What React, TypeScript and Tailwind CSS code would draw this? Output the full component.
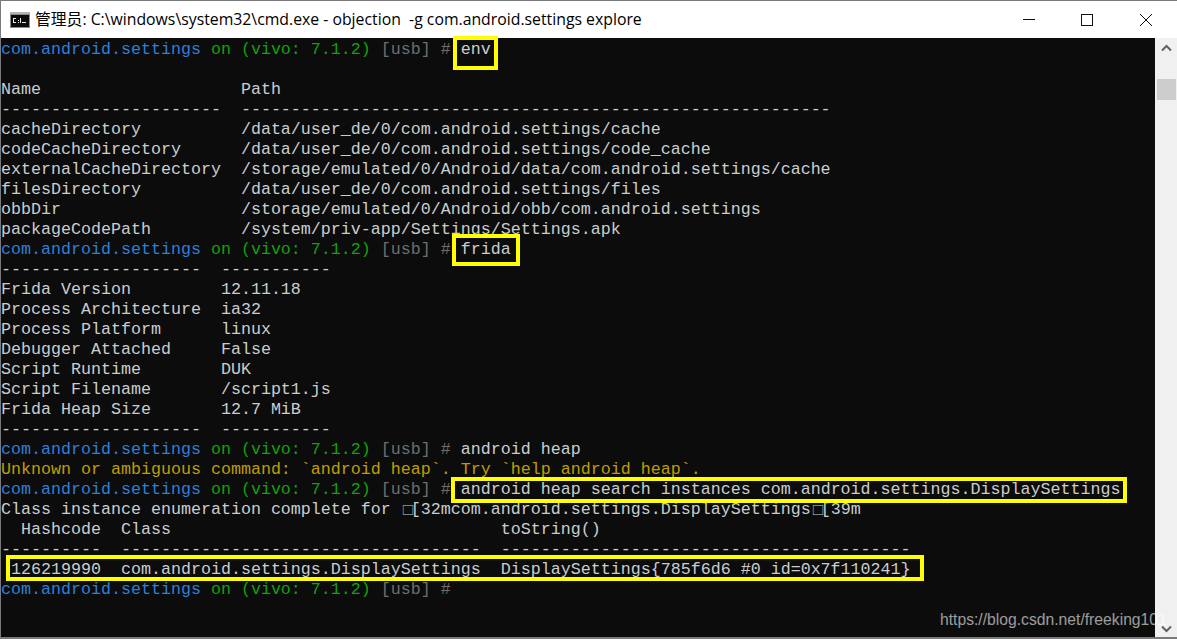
import React from "react";

const Prompt = ({ cmd }: { cmd?: string }) => (
  <>
    <span className="text-[#2f7fd6]">com.android.settings </span>
    <span className="text-[#13a10e]">on (vivo: 7.1.2) </span>
    <span className="text-[#6e6e6e]">[usb] # </span>
    {cmd ? <span>{cmd}</span> : null}
  </>
);

const Esc = () => (
  <span className="inline-block w-[10px] translate-x-[2px] scale-[1.25] font-['Noto_Sans_CJK_SC',sans-serif] text-[10px] leading-none">□</span>
);

const lines: React.ReactNode[] = [
  <Prompt cmd="env" />,
  "",
  "Name                    Path",
  "----------------------  -----------------------------------------------------------",
  "cacheDirectory          /data/user_de/0/com.android.settings/cache",
  "codeCacheDirectory      /data/user_de/0/com.android.settings/code_cache",
  "externalCacheDirectory  /storage/emulated/0/Android/data/com.android.settings/cache",
  "filesDirectory          /data/user_de/0/com.android.settings/files",
  "obbDir                  /storage/emulated/0/Android/obb/com.android.settings",
  "packageCodePath         /system/priv-app/Settings/Settings.apk",
  <Prompt cmd="frida" />,
  "--------------------  -----------",
  "Frida Version         12.11.18",
  "Process Architecture  ia32",
  "Process Platform      linux",
  "Debugger Attached     False",
  "Script Runtime        DUK",
  "Script Filename       /script1.js",
  "Frida Heap Size       12.7 MiB",
  "--------------------  -----------",
  <Prompt cmd="android heap" />,
  <span className="text-[#c19c00]">Unknown or ambiguous command: `android heap`. Try `help android heap`.</span>,
  <Prompt cmd="android heap search instances com.android.settings.DisplaySettings" />,
  <>
    Class instance enumeration complete for <Esc />[32mcom.android.settings.DisplaySettings<Esc />[39m
  </>,
  "  Hashcode  Class                                 toString()",
  "----------  ------------------------------------  -----------------------------------------",
  " 126219990  com.android.settings.DisplaySettings  DisplaySettings{785f6d6 #0 id=0x7f110241}",
  <Prompt />,
];

const boxes = [
  "left-[452px] top-[35px] w-[45px] h-[34px] border-[4px]",
  "left-[451px] top-[233px] w-[68px] h-[32px] border-[4px]",
  "left-[450px] top-[476px] w-[676px] h-[26px] border-[4px]",
  "left-[5px] top-[554px] w-[918px] h-[26px] border-[4px]",
];

export default function App() {
  return (
    <div className="relative flex h-[639px] w-[1177px] flex-col overflow-hidden border-t border-l border-b-2 border-[#7a7a7a] bg-white">
      <div className="flex h-[37px] shrink-0 items-center bg-white">
        <svg className="ml-[9px] h-[16px] w-[20px] shrink-0" viewBox="0 0 20 16" shapeRendering="crispEdges">
          <rect width="20" height="16" fill="#8a8a8a" />
          <rect y="0" width="20" height="2" fill="#b5b5b5" />
          <rect x="1" y="3" width="18" height="12" fill="#0c0c0c" />
          <path d="M3 6h3v1H4v3h2v1H3zM8 8h1v1H8zM8 10h1v1H8zM10 6h1v5h-1zM12 10h4v1h-4z" fill="#e8e8e8" />
        </svg>
        <div className="ml-[5px] whitespace-pre font-['Open_Sans','Noto_Sans_CJK_SC',sans-serif] text-[15.8px] text-black">
          管理员: C:\windows\system32\cmd.exe - objection  -g com.android.settings explore
        </div>
        <div className="ml-auto flex items-center">
          <svg className="h-[14px] w-[14px]" viewBox="0 0 14 14" shapeRendering="crispEdges">
            <path d="M1 6.5h12" stroke="#111" fill="none" />
          </svg>
          <svg className="ml-[44px] h-[14px] w-[14px]" viewBox="0 0 14 14" shapeRendering="crispEdges">
            <rect x="1.5" y="1.5" width="11" height="11" stroke="#111" fill="none" />
          </svg>
          <svg className="ml-[45px] mr-[24px] h-[14px] w-[14px]" viewBox="0 0 14 14">
            <path d="M1 1l12 12M13 1L1 13" stroke="#111" strokeWidth="1" fill="none" />
          </svg>
        </div>
      </div>
      <div className="flex min-h-0 flex-1">
        <div className="flex-1 overflow-hidden bg-[#0c0c0c] pt-[2px]">
          {lines.map((line, i) => (
            <div
              key={i}
              className="h-[20px] whitespace-pre font-['Liberation_Mono','Noto_Sans_CJK_SC',monospace] text-[16.67px] leading-[20px] text-[#cccccc]"
            >
              {line}
            </div>
          ))}
        </div>
        <div className="flex w-[22px] shrink-0 flex-col items-center bg-[#f0f0f0]">
          <svg className="mt-[6px] h-[8px] w-[11px]" viewBox="0 0 11 8">
            <path d="M1 6.5l4.5-4.5 4.5 4.5" stroke="#606060" strokeWidth="2" fill="none" />
          </svg>
          <div className="mt-[27px] h-[21px] w-[19px] bg-[#cdcdcd]" />
          <svg className="mt-auto mb-[4px] h-[8px] w-[11px]" viewBox="0 0 11 8">
            <path d="M1 1.5l4.5 4.5 4.5-4.5" stroke="#606060" strokeWidth="2" fill="none" />
          </svg>
        </div>
      </div>
      {boxes.map((b) => (
        <div key={b} className={`pointer-events-none absolute border-[#ffff00] ${b}`} />
      ))}
      <div className="absolute left-[939px] top-[609px] whitespace-nowrap font-['Liberation_Sans',sans-serif] text-[15.7px] leading-[20px] text-white/60">
        https://blog.csdn.net/freeking101
      </div>
    </div>
  );
}
